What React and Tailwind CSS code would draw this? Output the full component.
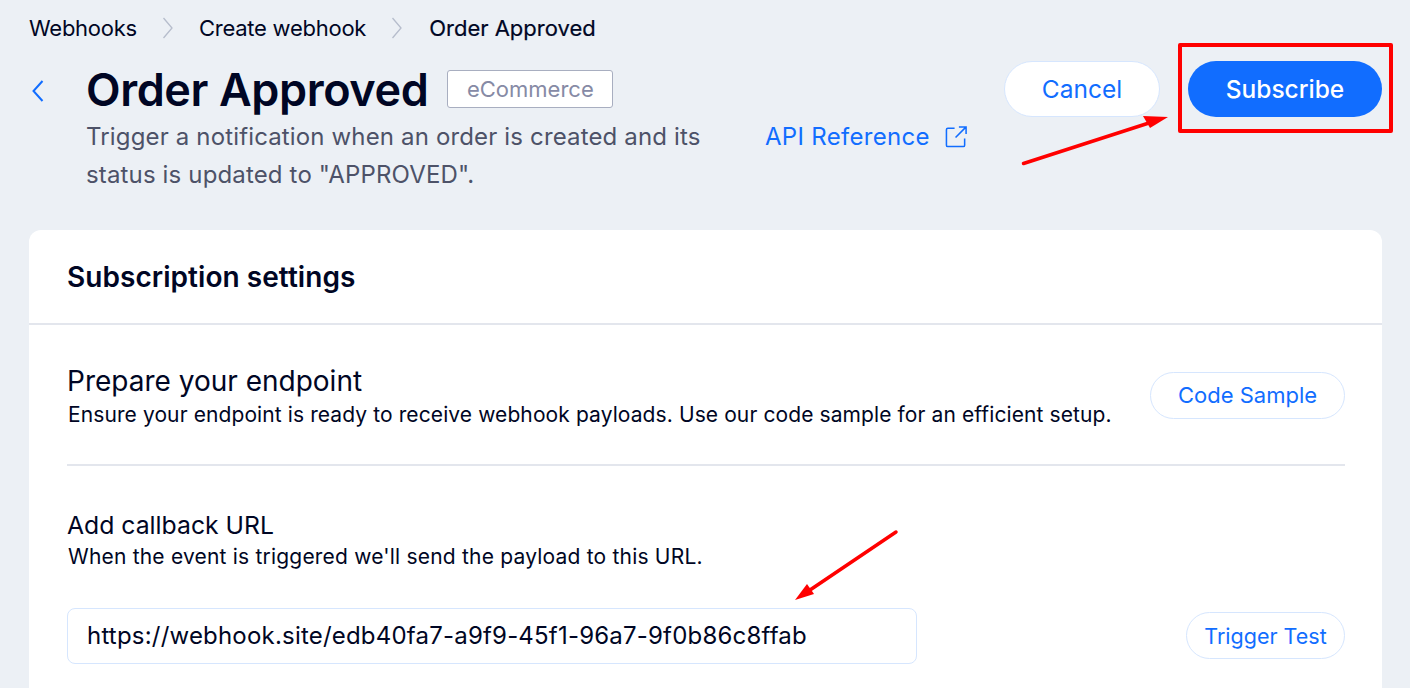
import React from "react";

const Chevron = () => (
  <svg width="12" height="24" viewBox="0 0 12 24" fill="none" stroke="#b6bdcc" strokeWidth="1.3" className="mx-[25px]">
    <path d="M1.5 2 L10 12 L1.5 22" />
  </svg>
);

export default function App() {
  return (
    <div className="relative w-[1410px] h-[688px] overflow-hidden bg-[#ecf0f5] font-['Inter',sans-serif] text-[#000624]">
      <div className="flex items-center h-[24px] mt-[16px] ml-[29px] text-[22px] leading-[24px] tracking-[-0.25px]">
        <span>Webhooks</span>
        <Chevron />
        <span>Create webhook</span>
        <Chevron />
        <span className="ml-[1px] tracking-[0px] [-webkit-text-stroke:0.2px_#000624]">Order Approved</span>
      </div>

      <div className="flex ml-[29px] mr-[28px] mt-[22px] h-[169px]">
        <div className="w-[57px] pt-[17px] pl-[2px] text-[#116dff]">
          <svg width="18" height="24" viewBox="0 0 18 24" fill="none" stroke="currentColor" strokeWidth="2">
            <path d="M11.5 2 L2.5 12 L11.5 22" />
          </svg>
        </div>
        <div className="w-[679px]">
          <div className="flex items-center h-[56px]">
            <h1 className="text-[45px] leading-[56px] font-semibold tracking-[-0.4px]">Order Approved</h1>
            <span className="ml-[19px] mt-[-2px] w-[166px] h-[38px] flex items-center justify-center bg-white border border-[#a8aec0] rounded-[3px] text-[22px] text-[#868aa5]">eCommerce</span>
          </div>
          <p className="text-[24px] leading-[38px] text-[#4d5268] tracking-[0.15px] w-[640px]">
            Trigger a notification when an order is created and its status is updated to "APPROVED".
          </p>
        </div>
        <div className="flex items-start pt-[56px] gap-[15px] text-[#116dff]">
          <span className="text-[24px] leading-[38px] tracking-[0.3px]">API Reference</span>
          <svg width="23" height="23" viewBox="0 0 24 24" fill="none" stroke="currentColor" strokeWidth="1.6" className="mt-[7px]">
            <path d="M10 3.5 H3 Q1.5 3.5 1.5 5 V21 Q1.5 22.5 3 22.5 H19 Q20.5 22.5 20.5 21 V14" />
            <path d="M11 13 L21.5 2.5 M14.5 2 H22 V9.5" />
          </svg>
        </div>
        <div className="ml-auto flex items-start gap-[28px] mt-[-1px]">
          <button className="w-[156px] h-[56px] rounded-full bg-white border border-[#d6e6fe] text-[#116dff] text-[24.5px]">Cancel</button>
          <button className="w-[194px] h-[56px] rounded-full bg-[#116dff] text-white text-[24.5px] font-medium">Subscribe</button>
        </div>
      </div>

      <div className="ml-[29px] mr-[28px] mt-[-1px] bg-white rounded-t-[12px] h-[480px]">
        <div className="h-[95px] flex items-center px-[38px] border-b-2 border-[#e3e6ed]">
          <h2 className="text-[28px] font-semibold tracking-[0.05px]">Subscription settings</h2>
        </div>
        <div className="ml-[38px] mr-[37px]">
          <div className="flex items-center justify-between h-[141px] pt-[2px] border-b-2 border-[#e3e6ed]">
            <div className="pl-[1px] mt-[3px]">
              <h3 className="ml-[-1px] text-[28px] leading-[32px] font-normal">Prepare your endpoint</h3>
              <p className="text-[21px] leading-[28px] tracking-[0.1px] mt-[4px]">Ensure your endpoint is ready to receive webhook payloads. Use our code sample for an efficient setup.</p>
            </div>
            <button className="w-[195px] h-[47px] rounded-full border border-[#d6e6fe] text-[#116dff] text-[22px]">Code Sample</button>
          </div>
          <div className="pt-[43px]">
            <div className="pl-[1px]">
              <h3 className="ml-[-1px] text-[24.75px] leading-[32px] font-normal">Add callback URL</h3>
              <p className="text-[21px] leading-[28px] tracking-[0.2px] mt-[2px]">When the event is triggered we'll send the payload to this URL.</p>
            </div>
            <div className="flex items-center justify-between mt-[37px]">
              <div className="w-[850px] h-[56px] flex items-center px-[19px] rounded-[8px] border border-[#d6e6fe] text-[24px] tracking-[0.2px]">
                https://webhook.site/edb40fa7-a9f9-45f1-96a7-9f0b86c8ffab
              </div>
              <button className="w-[159px] h-[47px] mt-[-2px] pt-[2px] rounded-full border border-[#d6e6fe] text-[#116dff] text-[21.5px]">Trigger Test</button>
            </div>
          </div>
        </div>
      </div>

      <div className="absolute left-[1178px] top-[43px] w-[215px] h-[90px] border-[4px] border-[#ff0000] rounded-[2px]" />
      <svg className="absolute left-0 top-0 pointer-events-none" width="1410" height="688" fill="none">
        <path d="M1023.5 163.5 L1152 122" stroke="#ff0000" strokeWidth="3.5" strokeLinecap="round" />
        <path d="M1168 117 L1143 116 L1150 128 Z" fill="#ff0000" />
        <path d="M896 532 L810 590" stroke="#ff0000" strokeWidth="3.5" strokeLinecap="round" />
        <path d="M795 600 L807 584 L814 594 Z" fill="#ff0000" />
      </svg>
    </div>
  );
}
